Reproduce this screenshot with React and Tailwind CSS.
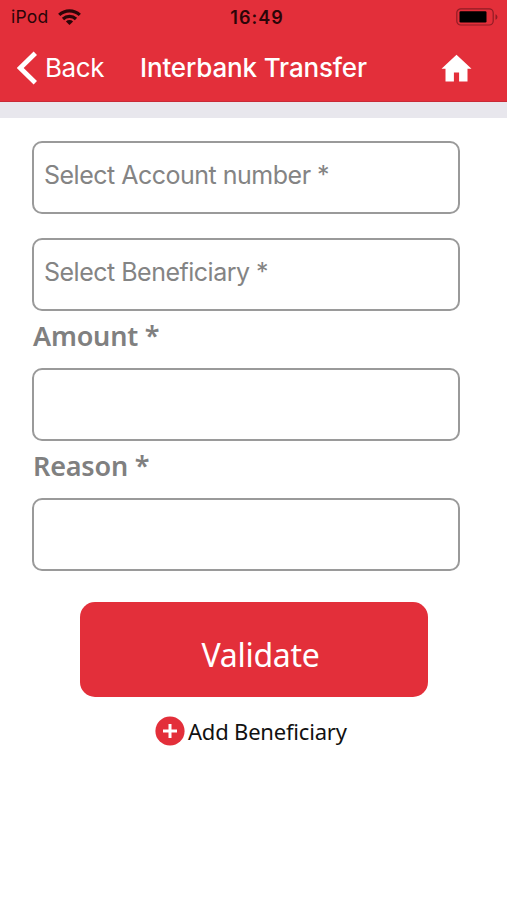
import { useState } from 'react';

function StatusBar() {
    return (
        <div className="grid h-[34px] grid-cols-3 items-center pl-[11px] pr-[9px] text-[#2b0508]">
            <div className="flex items-center gap-[10px]">
                <span className="text-[17.5px] leading-5 tracking-[0.2px]">iPod</span>
                <svg className="h-4 w-[23px]" viewBox="0 0 23 16" fill="none" stroke="currentColor" strokeWidth="3.2">
                    <path d="M1.2 5.9a15 15 0 0 1 20.6 0" />
                    <path d="M5 10a9.4 9.4 0 0 1 13 0" />
                    <path d="M11.5 16l-3.6-3.5a5.2 5.2 0 0 1 7.2 0z" fill="currentColor" stroke="none" />
                </svg>
            </div>
            <span className="pl-[5px] pt-px text-center text-[18px] font-semibold leading-5 tracking-[1px]">16:49</span>
            <svg className="h-[18px] w-[42px] justify-self-end" viewBox="0 0 42 18">
                <rect x="0.8" y="0.8" width="36.4" height="16.2" rx="4" fill="none" stroke="#8f1c25" strokeWidth="1.2" />
                <rect x="3.5" y="3.3" width="27" height="11.2" rx="1.2" fill="#000" />
                <path d="M39.5 6.2c2.6 1 2.6 4.6 0 5.6z" fill="#8f1c25" />
            </svg>
        </div>
    );
}

function NavBar() {
    return (
        <div className="flex h-[67px] items-center pl-[17px] pr-[35px] text-white">
            <button type="button" className="flex items-center gap-[8px]">
                <svg className="h-[34px] w-[20px]" viewBox="0 0 20 34" fill="none" stroke="currentColor" strokeWidth="4.8">
                    <path d="M18.3 2.2L3.2 17l15.1 14.8" />
                </svg>
                <span className="w-[95px] text-left text-[26px] leading-8 tracking-[-0.4px]">Back</span>
            </button>
            <h1 className="text-[26px] font-medium leading-8 tracking-[-0.15px]">Interbank Transfer</h1>
            <button type="button" aria-label="Home" className="ml-auto">
                <svg className="h-[28px] w-[31px]" viewBox="0 0 31 28" fill="currentColor">
                    <path d="M15.5 0.8L0.5 14.8h4v12.7h8.4v-9h5.2v9h8.4V14.8h4z" />
                </svg>
            </button>
        </div>
    );
}

function SelectField({ label }) {
    return (
        <button
            type="button"
            className="block h-[73px] w-full rounded-[10px] border-2 border-[#9a9a9a] pb-[5px] pl-[10px] text-left text-[25px] leading-8 tracking-[-0.5px] text-[#848484]"
        >
            {label}
        </button>
    );
}

function TextField({ label, name, value, onChange }) {
    return (
        <div>
            <label htmlFor={name} className="block h-[57px] pl-px pt-[7px] font-['Noto_Sans',sans-serif] text-[27px] font-semibold leading-9 tracking-[-0.2px] text-[#808080]">
                {label}
            </label>
            <input
                type="text"
                id={name}
                name={name}
                value={value}
                onChange={onChange}
                className="block h-[73px] w-full rounded-[10px] border-2 border-[#9a9a9a] px-[10px] text-[25px] text-[#848484] outline-none"
            />
        </div>
    );
}

export default function App() {
    const [transfer, setTransfer] = useState({ amount: '', reason: '' });

    const handleChange = (e) => {
        const { name, value } = e.target;
        setTransfer(prev => ({ ...prev, [name]: value }));
    };

    return (
        <div className="min-h-screen w-full bg-white font-[Inter,sans-serif]">
            <header className="border-b border-[#c92a36] bg-[#e32f3a]">
                <StatusBar />
                <NavBar />
            </header>
            <div className="h-[16px] bg-[#e8e7ed]" />

            <form className="pl-[32px] pr-[47px] pt-[23px]" onSubmit={(e) => e.preventDefault()}>
                <SelectField label="Select Account number *" />
                <div className="h-6" />
                <SelectField label="Select Beneficiary *" />
                <TextField label="Amount *" name="amount" value={transfer.amount} onChange={handleChange} />
                <TextField label="Reason *" name="reason" value={transfer.reason} onChange={handleChange} />
                <button
                    type="submit"
                    className="ml-[48px] mt-[31px] flex h-[95px] w-[348px] items-center justify-center rounded-[15px] bg-[#e32f3a] pl-[13px] pt-[10px] font-['Noto_Sans',sans-serif] text-[32px] tracking-[-0.3px] text-white"
                >
                    Validate
                </button>
            </form>

            <button type="button" className="ml-[155px] mt-[19px] flex items-center gap-[3px] text-[#111]">
                <svg className="h-[30px] w-[30px]" viewBox="0 0 30 30">
                    <circle cx="15" cy="15" r="14.6" fill="#e32f3a" />
                    <path d="M15 8v14M8 15h14" stroke="#fff" strokeWidth="3" />
                </svg>
                <span className="font-['Noto_Sans',sans-serif] text-[22px] leading-7 tracking-[-0.2px]">Add Beneficiary</span>
            </button>
        </div>
    );
}
